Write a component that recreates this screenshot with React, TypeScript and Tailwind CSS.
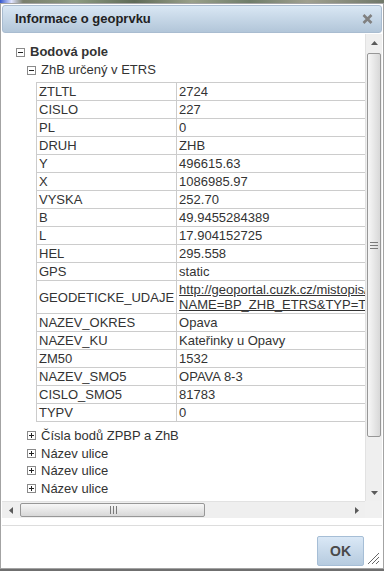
import React from 'react';

const rows: [string, string][] = [
  ['ZTLTL', '2724'],
  ['CISLO', '227'],
  ['PL', '0'],
  ['DRUH', 'ZHB'],
  ['Y', '496615.63'],
  ['X', '1086985.97'],
  ['VYSKA', '252.70'],
  ['B', '49.9455284389'],
  ['L', '17.904152725'],
  ['HEL', '295.558'],
  ['GPS', 'static'],
  ['GEODETICKE_UDAJE', ''],
  ['NAZEV_OKRES', 'Opava'],
  ['NAZEV_KU', 'Kateřinky u Opavy'],
  ['ZM50', '1532'],
  ['NAZEV_SMO5', 'OPAVA 8-3'],
  ['CISLO_SMO5', '81783'],
  ['TYPV', '0'],
];

function Toggle({ open }: { open: boolean }) {
  return (
    <svg width="9" height="9" viewBox="0 0 9 9" className="shrink-0 mr-[5px]" shapeRendering="crispEdges">
      <rect x="0.5" y="0.5" width="8" height="8" fill="#fff" stroke="#8a8a8a" />
      <path d="M2 4.5h5" stroke="#222" />
      {!open && <path d="M4.5 2v5" stroke="#222" />}
    </svg>
  );
}

function Node({ open, label, bold }: { open: boolean; label: string; bold?: boolean }) {
  return (
    <div className={`flex items-center whitespace-nowrap ${bold ? 'h-[18px] font-bold' : 'h-[17.5px]'}`}>
      <Toggle open={open} />
      <span>{label}</span>
    </div>
  );
}

function Arrow({ dir }: { dir: 'up' | 'down' | 'left' | 'right' }) {
  const d = {
    up: 'M0 4 L3.5 0 L7 4 Z',
    down: 'M0 0 L7 0 L3.5 4 Z',
    left: 'M4 0 L4 7 L0 3.5 Z',
    right: 'M0 0 L4 3.5 L0 7 Z',
  }[dir];
  const vertical = dir === 'up' || dir === 'down';
  return (
    <svg width={vertical ? 7 : 4} height={vertical ? 4 : 7} viewBox={vertical ? '0 0 7 4' : '0 0 4 7'}>
      <path d={d} fill="#5a5a5a" />
    </svg>
  );
}

function VScroll() {
  return (
    <div className="w-[17px] shrink-0 flex flex-col bg-[#efefef] border-l border-[#e2e2e2]">
      <div className="h-[17px] flex items-center justify-center">
        <Arrow dir="up" />
      </div>
      <div className="mt-[2px] h-[384px] mx-px border border-[#979797] rounded-[2px] bg-gradient-to-r from-[#f7f7f7] to-[#d8d8d8] flex items-center justify-center">
        <svg width="8" height="8" viewBox="0 0 8 8" shapeRendering="crispEdges">
          <path d="M0 1.5h8M0 4.5h8M0 7.5h8" stroke="#7a7a7a" />
        </svg>
      </div>
      <div className="flex-1" />
      <div className="h-[17px] flex items-center justify-center">
        <Arrow dir="down" />
      </div>
    </div>
  );
}

function HScroll() {
  return (
    <div className="h-[17px] flex shrink-0">
      <div className="flex-1 flex bg-[#efefef] border-t border-[#e2e2e2]">
        <div className="w-[17px] flex items-center justify-center">
          <Arrow dir="left" />
        </div>
        <div className="ml-px my-px w-[185px] border border-[#979797] rounded-[2px] bg-gradient-to-b from-[#f7f7f7] to-[#d8d8d8] flex items-center justify-center">
          <svg width="8" height="8" viewBox="0 0 8 8" shapeRendering="crispEdges">
            <path d="M1.5 0v8M4.5 0v8M7.5 0v8" stroke="#7a7a7a" />
          </svg>
        </div>
        <div className="flex-1" />
        <div className="w-[17px] flex items-center justify-center">
          <Arrow dir="right" />
        </div>
      </div>
      <div className="w-[17px] bg-[#f0f0f0]" />
    </div>
  );
}

export default function App() {
  return (
    <div className="w-[384px] h-[571px] overflow-hidden bg-[#6f6f6f] font-['Liberation_Sans',Arial,sans-serif] text-[13px] text-[#333]">
      <div className="h-[3px] bg-[linear-gradient(90deg,#3355cc_0,#dfe4ff_3%,#7a7f6e_6%,#8c9a80_20%,#5f6b58_35%,#9aa08a_50%,#6f7d6a_65%,#a0a090_80%,#70786a_100%)]" />
      <div className="h-[566px] border border-[#a3a3a3] bg-white p-px flex flex-col">
        <div className="h-[28px] shrink-0 rounded-[3px] border border-[#a9bcd0] bg-gradient-to-b from-[#d9e7f4] to-[#b2c6d9] flex items-center justify-between pl-[12px] pr-[8px]">
          <span className="font-bold text-[13px] text-[#222]">Informace o geoprvku</span>
          <svg width="11" height="10" viewBox="0 0 11 10">
            <path d="M1.5 1 L9.5 9 M9.5 1 L1.5 9" stroke="#808080" strokeWidth="2.6" />
          </svg>
        </div>

        <div className="mt-px h-[467px] flex shrink-0">
          <div className="flex-1 overflow-hidden pt-[9px] pl-[14px]">
            <Node open bold label="Bodová pole" />
            <div className="pl-[11px]">
              <div className="h-[18px] flex items-center whitespace-nowrap">
                <Toggle open />
                <span>ZhB určený v ETRS</span>
              </div>
              <table className="ml-[9px] mt-[3px] border-collapse">
                <tbody>
                  {rows.map(([k, v]) => (
                    <tr key={k}>
                      <td className="w-[139px] border border-[#cccccc] px-[2px] py-px leading-[15px] whitespace-nowrap align-middle">
                        {k}
                      </td>
                      <td className="w-[470px] border border-[#cccccc] px-[2px] py-px leading-[15px] whitespace-nowrap align-middle">
                        {k === 'GEODETICKE_UDAJE' ? (
                          <span className="underline">
                            http://geoportal.cuzk.cz/mistopis/getMistopis.aspx?LAYER_
                            <br />
                            NAME=BP_ZHB_ETRS&amp;TYP=TL&amp;ID=2724227
                          </span>
                        ) : (
                          v
                        )}
                      </td>
                    </tr>
                  ))}
                </tbody>
              </table>
              <div className="mt-[5px]">
                <Node open={false} label="Čísla bodů ZPBP a ZhB" />
                <Node open={false} label="Název ulice" />
                <Node open={false} label="Název ulice" />
                <Node open={false} label="Název ulice" />
                <Node open={false} label="Název ulice" />
                <Node open={false} label="Název ulice" />
              </div>
            </div>
          </div>
          <VScroll />
        </div>
        <HScroll />

        <div className="h-[7px] shrink-0" />
        <div className="h-px shrink-0 bg-[#dddddd]" />
        <div className="flex-1 flex justify-end items-start pt-[10px] pr-[2px]">
          <button className="w-[47px] h-[30px] rounded-[2px] border border-[#a6bed6] bg-gradient-to-b from-[#dae8f6] to-[#b6cbdf] text-[14px] font-bold text-[#4a4a4a]">
            OK
          </button>
          <svg width="13" height="13" viewBox="0 0 13 13" className="mt-[16px] ml-[3px]">
            <path d="M12 1 L1 12 M12 5 L5 12 M12 9 L9 12" stroke="#666" strokeWidth="1" />
          </svg>
        </div>
      </div>
    </div>
  );
}
